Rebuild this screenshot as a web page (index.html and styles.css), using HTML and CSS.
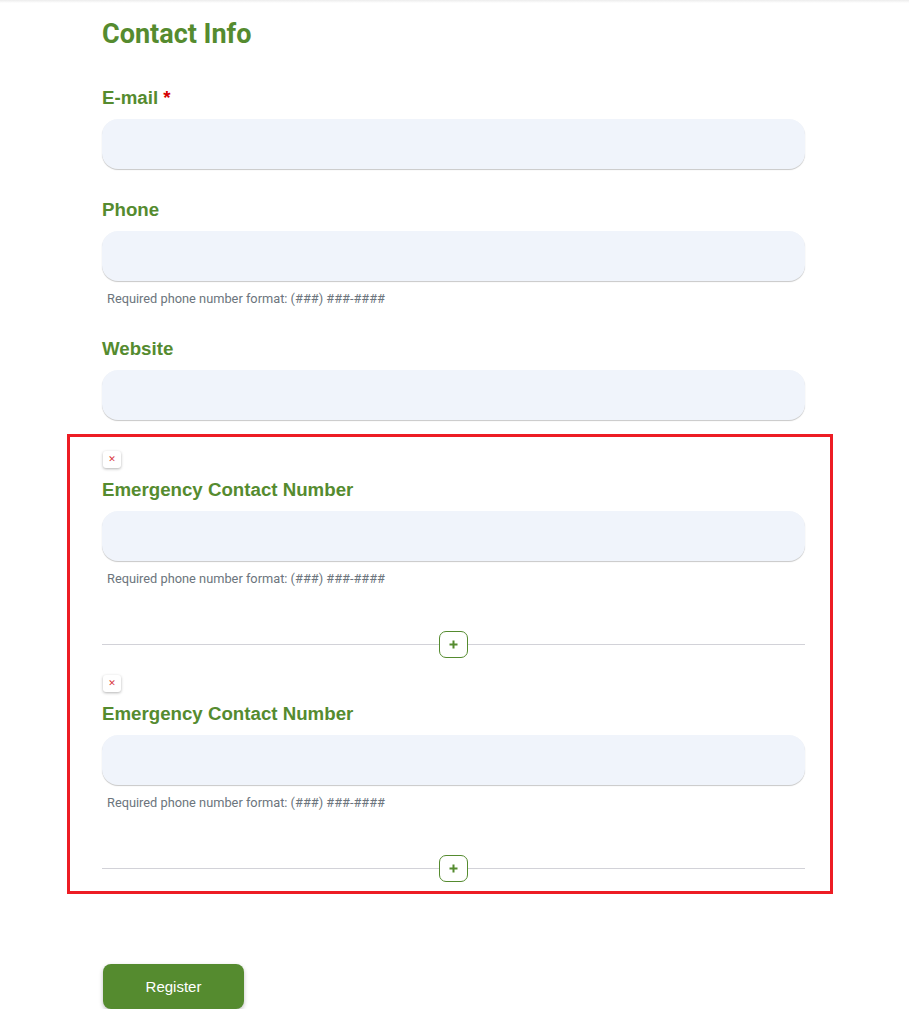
FILE: index.html
```html
<!DOCTYPE html>
<html lang="en">
<head>
<meta charset="utf-8">
<title>Contact Info</title>
<link rel="stylesheet" href="styles.css">
</head>
<body>
<div class="topbar"></div>
<form class="form">
  <h1 class="title">Contact Info</h1>

  <div class="field">
    <label class="label">E-mail <span class="req">*</span></label>
    <div class="input"></div>
  </div>

  <div class="field">
    <label class="label">Phone</label>
    <div class="input"></div>
    <div class="help">Required phone number format: (###) ###-####</div>
  </div>

  <div class="field">
    <label class="label">Website</label>
    <div class="input"></div>
  </div>

  <div class="annot">
    <div class="item">
      <button type="button" class="remove">&#x2715;</button>
      <label class="label">Emergency Contact Number</label>
      <div class="input"></div>
      <div class="help">Required phone number format: (###) ###-####</div>
      <div class="divider">
        <span class="line"></span>
        <button type="button" class="add" aria-label="Add">
          <svg width="9" height="9" viewBox="0 0 9 9"><path d="M4.5 0.5v8M0.5 4.5h8" stroke="#558b2f" stroke-width="2" fill="none"/></svg>
        </button>
        <span class="line"></span>
      </div>
    </div>
    <div class="item">
      <button type="button" class="remove">&#x2715;</button>
      <label class="label">Emergency Contact Number</label>
      <div class="input"></div>
      <div class="help">Required phone number format: (###) ###-####</div>
      <div class="divider">
        <span class="line"></span>
        <button type="button" class="add" aria-label="Add">
          <svg width="9" height="9" viewBox="0 0 9 9"><path d="M4.5 0.5v8M0.5 4.5h8" stroke="#558b2f" stroke-width="2" fill="none"/></svg>
        </button>
        <span class="line"></span>
      </div>
    </div>
  </div>

  <button type="button" class="register">Register</button>
</form>
</body>
</html>
```

FILE: styles.css
```css
html, body {
  margin: 0;
  padding: 0;
  background: #ffffff;
}

body {
  font-family: "Liberation Sans", Arial, sans-serif;
  overflow: hidden;
}

.topbar {
  height: 3px;
  background: linear-gradient(#ececec, #ffffff);
}

.form {
  width: 703px;
  margin-left: 102px;
  display: flex;
  flex-direction: column;
  align-items: stretch;
}

.title {
  font-family: Roboto, "Liberation Sans", sans-serif;
  font-weight: 700;
  font-size: 27px;
  line-height: 32px;
  color: #558b2f;
  margin: 15px 0 36px;
}

.field + .field {
  margin-top: 29px;
}

.label {
  display: block;
  font-family: "Liberation Sans", Arial, sans-serif;
  font-weight: 700;
  font-size: 18.7px;
  line-height: 22px;
  color: #558b2f;
  padding-top: 1px;
  margin-bottom: 10px;
}

.req {
  color: #d50000;
}

.input {
  height: 50px;
  border-radius: 16px;
  background: #f0f4fb;
  box-shadow: 0 1px 1px rgba(0, 0, 0, 0.22);
}

.help {
  font-family: Roboto, "Liberation Sans", sans-serif;
  font-size: 12.8px;
  line-height: 16px;
  color: #6c757d;
  margin: 10px 0 1px 5px;
}

.annot {
  margin: 14px -28px 0 -35px;
  border: 3px solid #ed1c24;
  padding: 14px 25px 9px 32px;
  display: flex;
  flex-direction: column;
  gap: 17px;
}

.item {
  display: flex;
  flex-direction: column;
}

.remove {
  width: 18px;
  height: 17px;
  margin: 0 0 10px 1px;
  padding: 0;
  border: none;
  border-radius: 3px;
  background: #ffffff;
  box-shadow: 0 1px 3px rgba(0, 0, 0, 0.3);
  color: #d9363e;
  font-family: "DejaVu Sans", sans-serif;
  font-size: 9px;
  line-height: 17px;
  text-align: center;
  cursor: pointer;
}

.divider {
  display: flex;
  align-items: center;
  margin-top: 43px;
  height: 27px;
}

.line {
  flex: 1;
  height: 1px;
  background: #d2d2d8;
}

.add {
  width: 29px;
  height: 27px;
  padding: 0;
  border: 1px solid #558b2f;
  border-radius: 7px;
  background: #ffffff;
  display: flex;
  align-items: center;
  justify-content: center;
  cursor: pointer;
}

.register {
  align-self: flex-start;
  margin: 70px 0 0 1px;
  width: 141px;
  height: 45px;
  border: none;
  border-radius: 8px;
  background: #558b2f;
  color: #ffffff;
  font-family: "Liberation Sans", Arial, sans-serif;
  font-size: 15px;
  box-shadow: 0 2px 4px rgba(0, 0, 0, 0.25);
  cursor: pointer;
}
```
